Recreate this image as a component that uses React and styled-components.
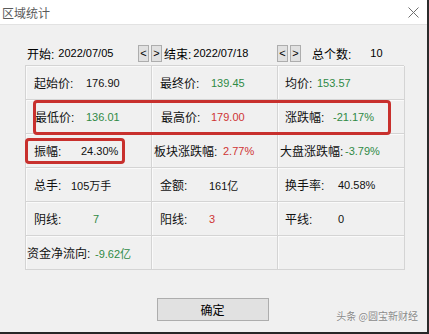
import React from "react";
import styled, { createGlobalStyle } from "styled-components";

const GlobalStyle = createGlobalStyle`
  body {
    margin: 0;
    background: #f0f0f0;
    font-family: "Liberation Sans", "Noto Sans CJK SC", sans-serif;
  }
`;

const Window = styled.div`
  position: relative;
  width: 429px;
  height: 334px;
  box-sizing: border-box;
  display: flex;
  flex-direction: column;
  background: #f0f0f0;
  border-right: 2px solid #2b2b2b;
  border-bottom: 2px solid #262626;
`;

const TitleBar = styled.div`
  height: 25px;
  box-sizing: border-box;
  background: #fff;
  border-bottom: 1px solid #e2e2e2;
  display: flex;
  align-items: center;
  justify-content: space-between;
  padding: 0 8px 0 2px;
`;

const Title = styled.span`
  font-size: 12px;
  color: #5a5a5a;
  font-family: "Noto Sans CJK SC", sans-serif;
`;

const HeaderRow = styled.div`
  display: flex;
  align-items: center;
  height: 18px;
  margin-top: 19px;
  padding-left: 27px;
  font-size: 12px;
  color: #000;
`;

const HeaderField = styled.div`
  width: ${(p) => p.$w}px;
  margin-left: ${(p) => p.$ml || 0}px;
  display: flex;
  align-items: center;
  white-space: nowrap;
`;

const Num = styled.span`
  font-size: 11px;
  margin-left: ${(p) => p.$ml || 0}px;
`;

const ArrowBtn = styled.button`
  width: 11px;
  height: 17px;
  padding: 0;
  margin-right: 2px;
  background: #e1e1e1;
  border: 1px solid #adadad;
  font-family: "Liberation Sans", sans-serif;
  font-size: 11px;
  line-height: 13px;
  color: #000;
`;

const GridWrap = styled.div`
  position: relative;
  margin: 3px 0 0 25px;
  width: 379px;
`;

const Grid = styled.div`
  display: grid;
  grid-template-columns: 126px 126px 127px;
  grid-auto-rows: 34px;
  border-top: 1px solid #d4d4d4;
  border-left: 1px solid #d4d4d4;
`;

const Cell = styled.div`
  display: flex;
  align-items: center;
  padding-left: ${(p) => p.$pad}px;
  border-right: 1px solid #d4d4d4;
  border-bottom: 1px solid #d4d4d4;
  box-shadow: inset 1px 1px 0 #fafafa;
  white-space: nowrap;
`;

const Label = styled.span`
  width: ${(p) => p.$w}px;
  flex-shrink: 0;
  font-size: 12px;
  color: #111;
`;

const tones = { g: "#2f8a45", r: "#cf3434", k: "#111" };

const Value = styled.span`
  font-size: 11px;
  color: ${(p) => tones[p.$tone]};
`;

const Mark = styled.div`
  position: absolute;
  left: ${(p) => p.$x}px;
  top: ${(p) => p.$y}px;
  width: ${(p) => p.$w}px;
  height: ${(p) => p.$h}px;
  box-sizing: border-box;
  border: 3px solid #c8302d;
  border-radius: 4px;
  pointer-events: none;
`;

const Footer = styled.div`
  display: flex;
  justify-content: center;
  margin-top: 28px;
  padding-right: 2px;
`;

const OkButton = styled.button`
  width: 112px;
  height: 23px;
  background: #e1e1e1;
  border: 1px solid #adadad;
  font-family: "Noto Sans CJK SC", sans-serif;
  font-size: 12px;
  color: #000;
  padding: 0;
`;

const Watermark = styled.span`
  position: absolute;
  right: 9px;
  bottom: 9px;
  font-size: 10px;
  color: #8a8a8a;
  text-shadow: 0 0 2px #fff;
  font-family: "Noto Sans CJK SC", sans-serif;
`;

// [label, value, tone, pad, valueX]
const cells = [
  ["起始价:", "176.90", "k", 8, 60],
  ["最终价:", "139.45", "g", 8, 59],
  ["均价:", "153.57", "g", 7, 39],
  ["最低价:", "136.01", "g", 9, 60],
  ["最高价:", "179.00", "r", 9, 59],
  ["涨跌幅:", "-21.17%", "g", 7, 55],
  ["振幅:", "24.30%", "k", 8, 55],
  ["板块涨跌幅:", "2.77%", "r", 2, 71],
  ["大盘涨跌幅:", "-3.79%", "g", 2, 67],
  ["总手:", "105万手", "k", 8, 45],
  ["金额:", "161亿", "k", 8, 57],
  ["换手率:", "40.58%", "k", 7, 60],
  ["阴线:", "7", "g", 8, 67],
  ["阳线:", "3", "r", 8, 57],
  ["平线:", "0", "k", 7, 60],
  ["资金净流向:", "-9.62亿", "g", 1, 69],
  ["", "", "k", 8, 0],
  ["", "", "k", 8, 0],
];

function CloseIcon() {
  return (
    <svg width="11" height="11" viewBox="0 0 11 11">
      <path d="M0.5 0.5 L10.5 10.5 M10.5 0.5 L0.5 10.5" stroke="#6f6f6f" strokeWidth="1" fill="none" />
    </svg>
  );
}

export default function App() {
  return (
    <>
      <GlobalStyle />
      <Window>
        <TitleBar>
          <Title>区域统计</Title>
          <CloseIcon />
        </TitleBar>

        <HeaderRow>
          <HeaderField $w={111}>
            开始:<Num $ml={4}>2022/07/05</Num>
          </HeaderField>
          <ArrowBtn>&lt;</ArrowBtn>
          <ArrowBtn>&gt;</ArrowBtn>
          <HeaderField $w={113}>
            结束:<Num $ml={2}>2022/07/18</Num>
          </HeaderField>
          <ArrowBtn>&lt;</ArrowBtn>
          <ArrowBtn>&gt;</ArrowBtn>
          <HeaderField $w={100} $ml={9}>
            总个数:<Num $ml={19}>10</Num>
          </HeaderField>
        </HeaderRow>

        <GridWrap>
          <Grid>
            {cells.map(([label, value, tone, pad, vx], i) => (
              <Cell key={i} $pad={pad}>
                <Label $w={vx - pad}>{label}</Label>
                <Value $tone={tone}>{value}</Value>
              </Cell>
            ))}
          </Grid>
          <Mark $x={8} $y={35} $w={358} $h={35} />
          <Mark $x={0} $y={73} $w={100} $h={26} />
        </GridWrap>

        <Footer>
          <OkButton>确定</OkButton>
        </Footer>
        <Watermark>头条 @圆宝新财经</Watermark>
      </Window>
    </>
  );
}
